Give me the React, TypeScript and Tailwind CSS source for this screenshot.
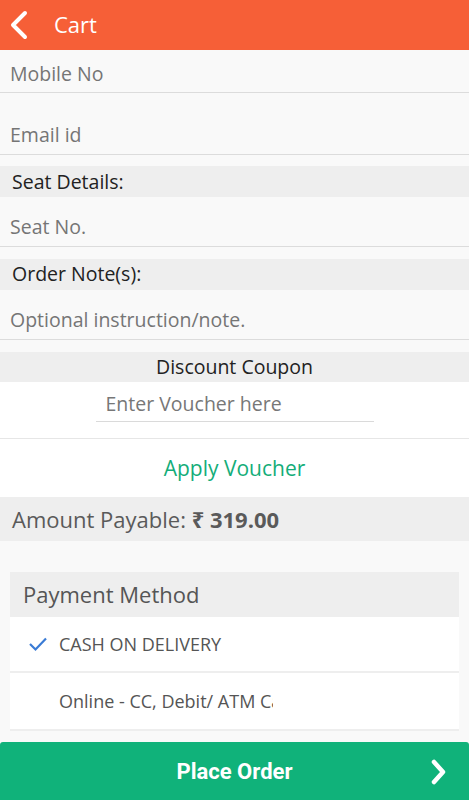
import React from 'react';

const font = { fontFamily: '"Open Sans", "Noto Sans", sans-serif' };

const InputRow = ({ label, className }: { label: string; className: string }) => (
  <div className={`flex items-end px-[10px] border-b border-[#dcdcdc] bg-[#f9f9f9] ${className}`}>
    <span className="text-[19.5px] text-[#757575] leading-none">{label}</span>
  </div>
);

const SectionHead = ({ label, center }: { label: string; center?: boolean }) => (
  <div className={`h-[31px] bg-[#eeeeee] flex items-center text-[19.5px] text-[#222] ${center ? 'justify-center' : 'px-[12px]'}`}>
    {label}
  </div>
);

export default function App() {
  return (
    <div className="w-[469px] h-[800px] bg-[#f9f9f9] flex flex-col overflow-hidden" style={font}>
      {/* Header */}
      <div className="h-[50px] bg-[#f65f37] flex items-center">
        <svg width="24" height="30" viewBox="0 0 24 30" className="ml-[8px]">
          <path d="M17 3 L5 15 L17 27" fill="none" stroke="white" strokeWidth="4" strokeLinecap="round" strokeLinejoin="round" />
        </svg>
        <span className="ml-[22px] text-[22px] text-white">Cart</span>
      </div>

      <InputRow label="Mobile No" className="h-[43px] pb-[8px]" />
      <InputRow label="Email id" className="h-[62px] pb-[9px]" />

      <div className="h-[11px]" />
      <SectionHead label="Seat Details:" />
      <InputRow label="Seat No." className="h-[50px] pb-[9px]" />

      <div className="h-[12px]" />
      <SectionHead label="Order Note(s):" />
      <InputRow label="Optional instruction/note." className="h-[50px] pb-[9px]" />

      <div className="h-[12px]" />
      <SectionHead label="Discount Coupon" center />
      <div className="h-[57px] bg-white border-b border-[#e6e6e6] flex justify-center">
        <div className="w-[278px] h-[40px] border-b border-[#dadada] flex items-end pb-[8px] pl-[10px] text-[19.5px] text-[#777] leading-none">
          Enter Voucher here
        </div>
      </div>
      <div className="h-[58px] bg-white flex items-center justify-center text-[21px] text-[#13ad79]">
        Apply Voucher
      </div>
      <div className="h-[44px] bg-[#eeeeee] flex items-center px-[12px] text-[22px] text-[#5a5a5a]">
        Amount Payable:&nbsp;<span className="font-bold">₹ 319.00</span>
      </div>

      <div className="h-[31px]" />
      {/* Payment method card */}
      <div className="mx-[10px] w-[449px] flex flex-col">
        <div className="h-[45px] bg-[#eeeeee] flex items-center px-[13px] text-[22px] text-[#555]">Payment Method</div>
        <div className="h-[56px] bg-white border-b-2 border-[#eeeeee] flex items-center">
          <svg width="20" height="16" viewBox="0 0 20 16" className="ml-[18px]">
            <path d="M2 8 L7.5 13.5 L18 2.5" fill="none" stroke="#3a7bd5" strokeWidth="2.2" />
          </svg>
          <span className="ml-[11px] text-[18px] text-[#555]">CASH ON DELIVERY</span>
        </div>
        <div className="h-[58px] bg-white border-b-2 border-[#eeeeee] flex items-center">
          <span className="ml-[49px] w-[214px] overflow-hidden whitespace-nowrap text-[18px] text-[#555]">
            Online - CC, Debit/ ATM Card
          </span>
        </div>
      </div>

      <div className="h-[11px]" />
      {/* Place order */}
      <div className="h-[58px] bg-[#10b27a] rounded-t-[3px] flex items-center relative">
        <span className="flex-1 text-center text-[22px] font-bold text-white" style={{ fontFamily: 'Roboto, sans-serif' }}>
          Place Order
        </span>
        <svg width="20" height="28" viewBox="0 0 20 28" className="absolute right-[20px] top-[16px]">
          <path d="M5 4 L14 14 L5 24" fill="none" stroke="white" strokeWidth="4.5" strokeLinecap="round" strokeLinejoin="round" />
        </svg>
      </div>
    </div>
  );
}
